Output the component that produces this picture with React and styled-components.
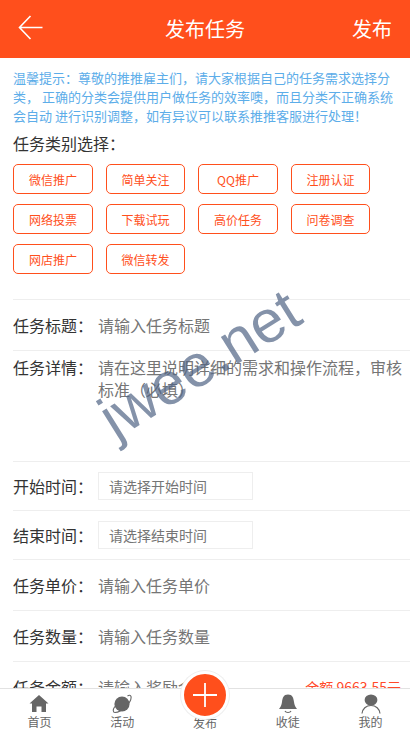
import React from "react";
import styled, { createGlobalStyle } from "styled-components";

const orange = "#ff4f1c";
const line = "#eeeeee";
const fontStack = `"Noto Sans CJK SC", "Liberation Sans", sans-serif`;

const GlobalStyle = createGlobalStyle`
    html, body {
        margin: 0;
        padding: 0;
        height: 732px;
        overflow: hidden;
        background: #fff;
        font-family: ${fontStack};
    }
    * {
        box-sizing: border-box;
    }
`;

const Page = styled.div`
    position: relative;
    width: 410px;
    height: 732px;
    overflow: hidden;
`;

const Header = styled.header`
    height: 58px;
    background-color: ${orange};
    color: #fff;
    display: flex;
    flex-flow: row nowrap;
    justify-content: space-between;
    align-items: center;
    padding: 0 18px 2px 18px;
    font-size: 20px;
`;

const HeaderSide = styled.div`
    width: 60px;
    display: flex;
    justify-content: ${(p) => (p.$right ? "flex-end" : "flex-start")};
`;

const Notice = styled.p`
    margin: 0;
    padding: 10px 13px 0;
    font-size: 13px;
    line-height: 19px;
    color: #5cade9;
`;

const SectionTitle = styled.div`
    padding: 6px 13px 0;
    font-size: 16px;
    line-height: 24px;
    color: #333;
`;

const TagGrid = styled.div`
    display: flex;
    flex-flow: row wrap;
    gap: 10px 13px;
    padding: 9px 13px 25px;
    width: 390px;
`;

const Tag = styled.div`
    width: ${(p) => (p.$narrow ? "79px" : "80px")};
    height: 30px;
    border: 1px solid ${orange};
    border-radius: 5px;
    color: ${orange};
    font-size: 12px;
    display: flex;
    justify-content: center;
    align-items: center;
`;

const Row = styled.div`
    margin-left: 13px;
    border-top: 1px solid ${line};
    height: ${(p) => p.$height || 50}px;
    display: flex;
    flex-flow: row nowrap;
    align-items: ${(p) => (p.$top ? "flex-start" : "center")};
    padding-top: ${(p) => (p.$top ? 5 : 0)}px;
    font-size: 16px;
    line-height: 22px;
`;

const Label = styled.div`
    width: 85px;
    flex: none;
    color: #333;
`;

const Hint = styled.div`
    flex: 1;
    color: #757575;
    padding-right: 7px;
`;

const DateBox = styled.div`
    width: 155px;
    height: 28px;
    border: 1px solid ${line};
    color: #757575;
    font-size: 14px;
    padding-left: 10px;
    display: flex;
    align-items: center;
`;

const Balance = styled.div`
    flex: none;
    padding-right: 9px;
    color: #ff4a2a;
    font-size: 14px;
`;

const Watermark = styled.div`
    position: absolute;
    left: 88px;
    top: 326px;
    font-family: "Liberation Sans", sans-serif;
    font-size: 60px;
    line-height: 76px;
    color: rgba(80, 100, 132, 0.7);
    transform: rotate(-32deg);
    white-space: nowrap;
    pointer-events: none;
`;

const TabBar = styled.nav`
    position: absolute;
    left: -2px;
    right: -2px;
    bottom: 0;
    height: 44px;
    background: #fff;
    border-top: 1px solid #e2e2e2;
    display: grid;
    grid-template-columns: repeat(5, 1fr);
`;

const Tab = styled.div`
    display: flex;
    flex-flow: column nowrap;
    align-items: center;
    justify-content: flex-start;
    padding-top: 5px;
    color: #666;
    font-size: 12px;
    line-height: 14px;

    svg {
        display: block;
        margin-bottom: 1px;
    }
`;

const CenterTab = styled(Tab)`
    justify-content: flex-end;
    padding-bottom: 2px;
`;

const Fab = styled.div`
    position: absolute;
    left: 181px;
    top: 671px;
    width: 48px;
    height: 48px;
    border-radius: 50%;
    background: ${orange};
    border: 3px solid #fff;
    box-shadow: 0 0 0 1px #eee;
    display: flex;
    justify-content: center;
    align-items: center;
`;

const BackArrow = () => (
    <svg width="26" height="28" viewBox="0 0 26 28" fill="none" stroke="#fff" strokeWidth="1.6">
        <path d="M12.5 2 L1.5 13.5 L12.5 25 M1.5 13.5 H24.5" />
    </svg>
);

const HomeIcon = () => (
    <svg width="20" height="20" viewBox="0 0 20 20" fill="#666">
        <path d="M10 1 L19.5 9.5 L17 9.5 L17 18 L12.5 18 L12.5 12.5 L7.5 12.5 L7.5 18 L3 18 L3 9.5 L0.5 9.5 Z" />
    </svg>
);

const PlanetIcon = () => (
    <svg width="20" height="20" viewBox="0 0 20 20">
        <circle cx="10" cy="10" r="7.6" fill="#666" />
        <path d="M2.8 12.5 C0.5 16 1 18.5 3 18.5 C6 18.5 11 15.5 14 12.5 C17 9.5 19.5 5 19 2.5 C18.5 1 17 1 15.5 2" fill="none" stroke="#666" strokeWidth="1.1" />
    </svg>
);

const BellIcon = () => (
    <svg width="20" height="20" viewBox="0 0 20 20">
        <path d="M10 0.5 C14.5 0.5 15.5 4 16 8 C16.3 11 17.5 13 19 15 L1 15 C2.5 13 3.7 11 4 8 C4.5 4 5.5 0.5 10 0.5 Z" fill="#666" />
        <path d="M7 17 C8 19 12 19 13 17" fill="none" stroke="#666" strokeWidth="1.2" />
    </svg>
);

const PersonIcon = () => (
    <svg width="20" height="20" viewBox="0 0 20 20">
        <ellipse cx="10" cy="6" rx="6.4" ry="5.6" fill="#666" />
        <path d="M1 19.5 C1.5 15 5 11.5 10 11.5 C15 11.5 18.5 15 19 19.5" fill="none" stroke="#666" strokeWidth="1.2" />
    </svg>
);

const PlusIcon = () => (
    <svg width="24" height="24" viewBox="0 0 24 24" stroke="#fff" strokeWidth="1.8">
        <path d="M12 0 V24 M0 12 H24" />
    </svg>
);

const tags = ["微信推广", "简单关注", "QQ推广", "注册认证", "网络投票", "下载试玩", "高价任务", "问卷调查", "网店推广", "微信转发"];

const App = () => {
    return (
        <Page>
            <GlobalStyle />
            <Header>
                <HeaderSide><BackArrow /></HeaderSide>
                <div>发布任务</div>
                <HeaderSide $right>发布</HeaderSide>
            </Header>
            <Notice>
                温馨提示：尊敬的推推雇主们，请大家根据自己的任务需求选择分类， 正确的分类会提供用户做任务的效率噢，而且分类不正确系统会自动 进行识别调整，如有异议可以联系推推客服进行处理！
            </Notice>
            <SectionTitle>任务类别选择：</SectionTitle>
            <TagGrid>
                {tags.map((t, i) => (
                    <Tag key={t} $narrow={i % 2 === 1}>{t}</Tag>
                ))}
            </TagGrid>
            <Row $height={51}>
                <Label>任务标题：</Label>
                <Hint>请输入任务标题</Hint>
            </Row>
            <Row $height={111} $top>
                <Label>任务详情：</Label>
                <Hint>请在这里说明详细的需求和操作流程，审核标准（必填）</Hint>
            </Row>
            <Row $height={49}>
                <Label>开始时间：</Label>
                <DateBox>请选择开始时间</DateBox>
            </Row>
            <Row $height={49}>
                <Label>结束时间：</Label>
                <DateBox>请选择结束时间</DateBox>
            </Row>
            <Row $height={51}>
                <Label>任务单价：</Label>
                <Hint>请输入任务单价</Hint>
            </Row>
            <Row $height={51}>
                <Label>任务数量：</Label>
                <Hint>请输入任务数量</Hint>
            </Row>
            <Row $height={51}>
                <Label>任务金额：</Label>
                <Hint>请输入奖励金额</Hint>
                <Balance>余额 9663.55元</Balance>
            </Row>
            <Watermark>jwee.net</Watermark>
            <TabBar>
                <Tab><HomeIcon />首页</Tab>
                <Tab><PlanetIcon />活动</Tab>
                <CenterTab>发布</CenterTab>
                <Tab><BellIcon />收徒</Tab>
                <Tab><PersonIcon />我的</Tab>
            </TabBar>
            <Fab><PlusIcon /></Fab>
        </Page>
    );
};

export default App;
